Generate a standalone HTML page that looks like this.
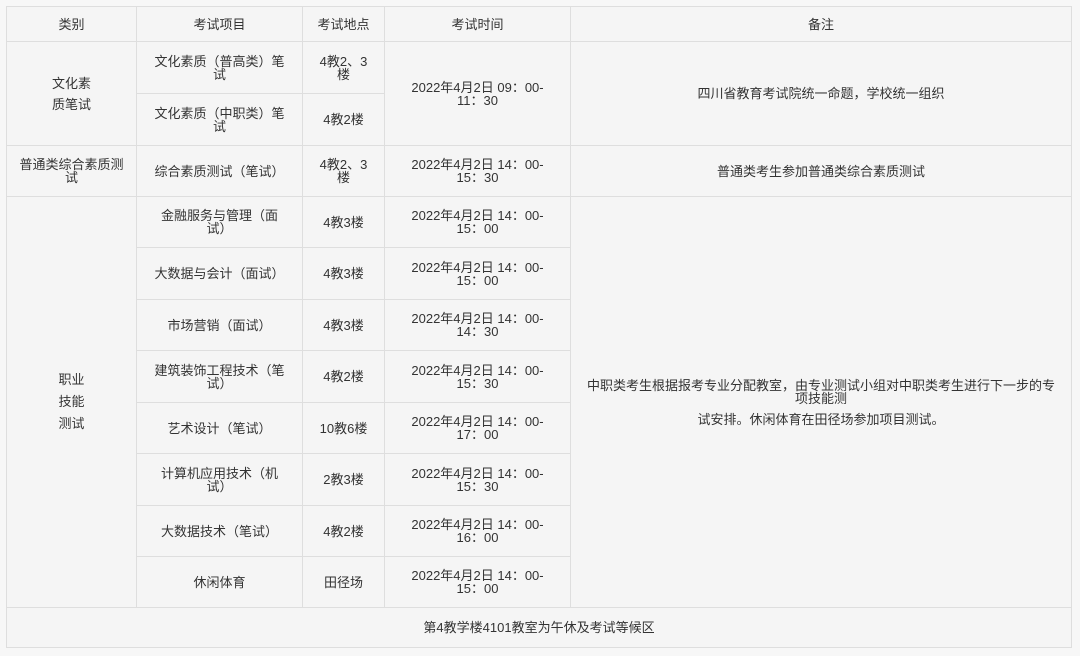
<!DOCTYPE html>
<html><head><meta charset="utf-8"><style>
body{margin:0;width:1080px;height:656px;background:#f7f7f7;font-family:"Liberation Sans","Noto Sans CJK SC",sans-serif;font-size:13px;color:#333;position:relative;overflow:hidden}
.c{position:absolute;box-sizing:border-box;border:1px solid #dedede;background:#f5f5f5;display:flex;flex-direction:column;align-items:center;justify-content:center;text-align:center;line-height:13px;white-space:nowrap}
.c p{margin:4px 0}
</style></head><body>
<div class="c" style="left:6px;top:6px;width:131px;height:36px">类别</div>
<div class="c" style="left:136px;top:6px;width:167px;height:36px">考试项目</div>
<div class="c" style="left:302px;top:6px;width:83px;height:36px">考试地点</div>
<div class="c" style="left:384px;top:6px;width:187px;height:36px">考试时间</div>
<div class="c" style="left:570px;top:6px;width:502px;height:36px">备注</div>

<div class="c" style="left:6px;top:41px;width:131px;height:105px"><p>文化素</p><p>质笔试</p></div>
<div class="c" style="left:136px;top:41px;width:167px;height:53px">文化素质（普高类）笔<br>试</div>
<div class="c" style="left:302px;top:41px;width:83px;height:53px">4教2、3<br>楼</div>
<div class="c" style="left:136px;top:93px;width:167px;height:53px">文化素质（中职类）笔<br>试</div>
<div class="c" style="left:302px;top:93px;width:83px;height:53px">4教2楼</div>
<div class="c" style="left:384px;top:41px;width:187px;height:105px">2022年4月2日 09：00-<br>11：30</div>
<div class="c" style="left:570px;top:41px;width:502px;height:105px">四川省教育考试院统一命题，学校统一组织</div>

<div class="c" style="left:6px;top:145px;width:131px;height:52px">普通类综合素质测<br>试</div>
<div class="c" style="left:136px;top:145px;width:167px;height:52px">综合素质测试（笔试）</div>
<div class="c" style="left:302px;top:145px;width:83px;height:52px">4教2、3<br>楼</div>
<div class="c" style="left:384px;top:145px;width:187px;height:52px">2022年4月2日 14：00-<br>15：30</div>
<div class="c" style="left:570px;top:145px;width:502px;height:52px">普通类考生参加普通类综合素质测试</div>

<div class="c" style="left:6px;top:196px;width:131px;height:412px;line-height:22px">职业<br>技能<br>测试</div>
<div class="c" style="left:570px;top:196px;width:502px;height:412px"><p>中职类考生根据报考专业分配教室，由专业测试小组对中职类考生进行下一步的专<br>项技能测</p><p>试安排。休闲体育在田径场参加项目测试。</p></div>

<div class="c" style="left:136px;top:196px;width:167px;height:52px">金融服务与管理（面<br>试）</div>
<div class="c" style="left:302px;top:196px;width:83px;height:52px">4教3楼</div>
<div class="c" style="left:384px;top:196px;width:187px;height:52px">2022年4月2日 14：00-<br>15：00</div>

<div class="c" style="left:136px;top:247px;width:167px;height:53px">大数据与会计（面试）</div>
<div class="c" style="left:302px;top:247px;width:83px;height:53px">4教3楼</div>
<div class="c" style="left:384px;top:247px;width:187px;height:53px">2022年4月2日 14：00-<br>15：00</div>

<div class="c" style="left:136px;top:299px;width:167px;height:52px">市场营销（面试）</div>
<div class="c" style="left:302px;top:299px;width:83px;height:52px">4教3楼</div>
<div class="c" style="left:384px;top:299px;width:187px;height:52px">2022年4月2日 14：00-<br>14：30</div>

<div class="c" style="left:136px;top:350px;width:167px;height:53px">建筑装饰工程技术（笔<br>试）</div>
<div class="c" style="left:302px;top:350px;width:83px;height:53px">4教2楼</div>
<div class="c" style="left:384px;top:350px;width:187px;height:53px">2022年4月2日 14：00-<br>15：30</div>

<div class="c" style="left:136px;top:402px;width:167px;height:52px">艺术设计（笔试）</div>
<div class="c" style="left:302px;top:402px;width:83px;height:52px">10教6楼</div>
<div class="c" style="left:384px;top:402px;width:187px;height:52px">2022年4月2日 14：00-<br>17：00</div>

<div class="c" style="left:136px;top:453px;width:167px;height:53px">计算机应用技术（机<br>试）</div>
<div class="c" style="left:302px;top:453px;width:83px;height:53px">2教3楼</div>
<div class="c" style="left:384px;top:453px;width:187px;height:53px">2022年4月2日 14：00-<br>15：30</div>

<div class="c" style="left:136px;top:505px;width:167px;height:52px">大数据技术（笔试）</div>
<div class="c" style="left:302px;top:505px;width:83px;height:52px">4教2楼</div>
<div class="c" style="left:384px;top:505px;width:187px;height:52px">2022年4月2日 14：00-<br>16：00</div>

<div class="c" style="left:136px;top:556px;width:167px;height:52px">休闲体育</div>
<div class="c" style="left:302px;top:556px;width:83px;height:52px">田径场</div>
<div class="c" style="left:384px;top:556px;width:187px;height:52px">2022年4月2日 14：00-<br>15：00</div>

<div class="c" style="left:6px;top:607px;width:1066px;height:41px">第4教学楼4101教室为午休及考试等候区</div>
</body></html>
